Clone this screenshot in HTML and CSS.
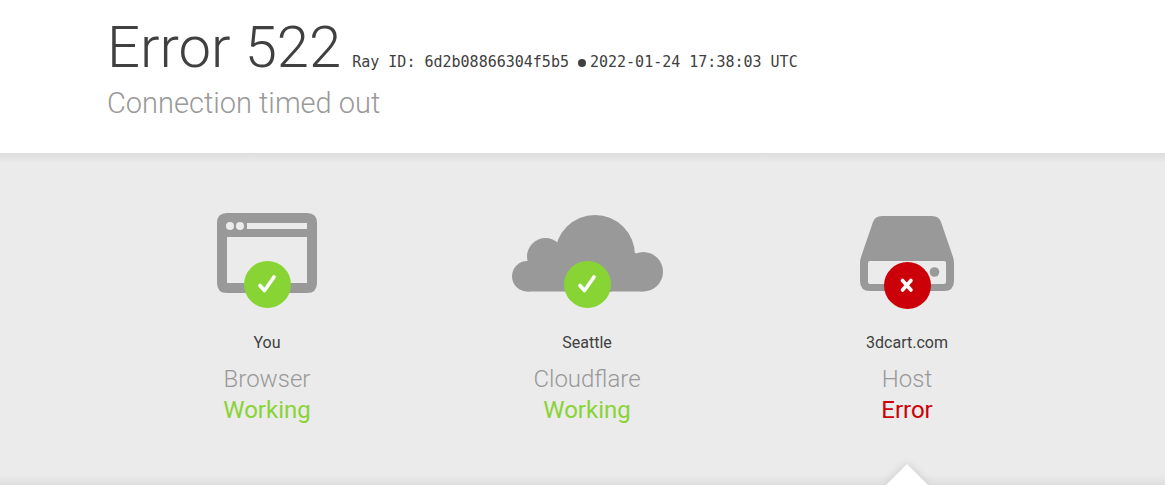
FILE: index.html
```html
<!DOCTYPE html>
<html lang="en">
<head>
  <meta charset="UTF-8" />
  <meta name="viewport" content="width=device-width,initial-scale=1.0" />
  <title>522: Connection timed out</title>
  <link rel="stylesheet" href="styles.css">
</head>
<body>
  <header class="wrap header">
    <h1 class="title">
      <span class="code">Error 522</span>
      <span class="ray">Ray ID: 6d2b08866304f5b5</span>
      <span class="dot"></span>
      <span class="ray">2022-01-24 17:38:03 UTC</span>
    </h1>
    <h2 class="subtitle">Connection timed out</h2>
  </header>

  <section class="status">
    <div class="wrap columns">
      <!-- browser -->
      <div class="item ok">
        <div class="icon">
          <svg width="100" height="80" viewBox="0 0 100 80" fill="#999">
            <path fill-rule="evenodd" d="M10 0H90Q100 0 100 10V70Q100 80 90 80H10Q0 80 0 70V10Q0 0 10 0ZM30 10V16H90V10ZM10 24V70H90V24Z"/>
            <circle cx="13" cy="13" r="4" fill="#ebebeb"/>
            <circle cx="23" cy="13" r="4" fill="#ebebeb"/>
          </svg>
          <svg class="badge" width="48" height="48" viewBox="0 0 48 48">
            <circle cx="24.5" cy="23.5" r="23.5" fill="#88d435"/>
            <path d="M17 24.5L21.5 29.5L31 16" fill="none" stroke="#fff" stroke-width="3.6" stroke-linecap="round" stroke-linejoin="round"/>
          </svg>
        </div>
        <span class="place">You</span>
        <h3 class="name">Browser</h3>
        <span class="state">Working</span>
      </div>

      <!-- edge -->
      <div class="item ok">
        <div class="icon">
          <svg width="151" height="79" viewBox="0 0 151 79" fill="#999">
            <circle cx="15.3" cy="63.2" r="15.3"/>
            <circle cx="33.5" cy="43.5" r="18.5"/>
            <circle cx="83" cy="42" r="40"/>
            <circle cx="131.3" cy="58.8" r="19.7"/>
            <path d="M15.3 78.5V48L40 40H124L131.3 60V78.5Z"/>
          </svg>
          <svg class="badge" width="48" height="48" viewBox="0 0 48 48">
            <circle cx="24.5" cy="23.5" r="23.5" fill="#88d435"/>
            <path d="M17 24.5L21.5 29.5L31 16" fill="none" stroke="#fff" stroke-width="3.6" stroke-linecap="round" stroke-linejoin="round"/>
          </svg>
        </div>
        <span class="place">Seattle</span>
        <h3 class="name">Cloudflare</h3>
        <span class="state">Working</span>
      </div>

      <!-- origin -->
      <div class="item failed">
        <div class="icon">
          <svg width="94" height="78" viewBox="0 0 94 78" fill="#999">
            <path fill-rule="evenodd" d="M22 3H72Q79 3 81 9L93 44Q94 47 94 50V68Q94 78 84 78H10Q0 78 0 68V50Q0 47 1 44L13 9Q15 3 22 3ZM10 48Q8 48 8 50V69Q8 71 10 71H84Q86 71 86 69V50Q86 48 84 48Z"/>
            <circle cx="74.5" cy="59" r="4.8"/>
          </svg>
          <svg class="badge" width="48" height="48" viewBox="0 0 48 48">
            <circle cx="24.5" cy="24.5" r="23.5" fill="#cc0009"/>
            <path d="M19.5 19.5L28 29M28 19.5L19.5 29" fill="none" stroke="#fff" stroke-width="3.6" stroke-linecap="round"/>
          </svg>
        </div>
        <span class="place">3dcart.com</span>
        <h3 class="name">Host</h3>
        <span class="state">Error</span>
        <svg class="pointer" width="60" height="30" viewBox="0 0 60 30">
          <path d="M9 30L30 9L51 30Z" fill="#fff"/>
        </svg>
      </div>
    </div>
  </section>
</body>
</html>
```
FILE: styles.css
```css
:root {
  --text:#404040;
  --muted:#999;
  --ok:#88d435;
  --failed:#cc0009;
}
*{box-sizing:border-box;margin:0;padding:0}
body{font-family:Roboto,Inter,sans-serif;background:#fff;color:var(--text);line-height:24px}
.wrap{max-width:960px;margin:0 auto}

/* heading */
.header,.status{padding-left:9px}
.header{max-width:969px;padding-top:10px;padding-bottom:32px;transform:none}
.title{display:flex;flex-wrap:wrap;align-items:baseline;font-weight:300}
.code{font-size:58px;line-height:75px;margin-right:11px}
.ray{font:15px/24px "DejaVu Sans Mono",monospace}
.dot{width:8px;height:8px;border-radius:50%;background:var(--text);margin:0 4px 2px 9px}
.subtitle{font-size:29px;line-height:36px;font-weight:300;color:var(--muted)}

/* status row */
.status{background:linear-gradient(#dedede,#ebebeb 10px,#ebebeb calc(100% - 10px),#dedede);text-align:center}
.columns{display:grid;grid-template-columns:repeat(3,1fr)}
.item{display:flex;flex-direction:column;align-items:center;padding:60px 0 59px;position:relative}
.icon{height:96px;position:relative}
.icon svg{display:block}
.icon .badge{position:absolute;left:50%;bottom:0;margin-left:-24px}
.place{font-size:16px;margin-top:22px}
.name{font-size:24px;line-height:30px;font-weight:300;color:var(--muted);margin-top:9px}
.state{font-size:24px;line-height:32px}
.ok .state{color:var(--ok)}
.failed .state{color:var(--failed)}
.pointer{position:absolute;bottom:0;left:50%;margin-left:-30px;filter:drop-shadow(0 0 4px rgba(0,0,0,.15))}
```
